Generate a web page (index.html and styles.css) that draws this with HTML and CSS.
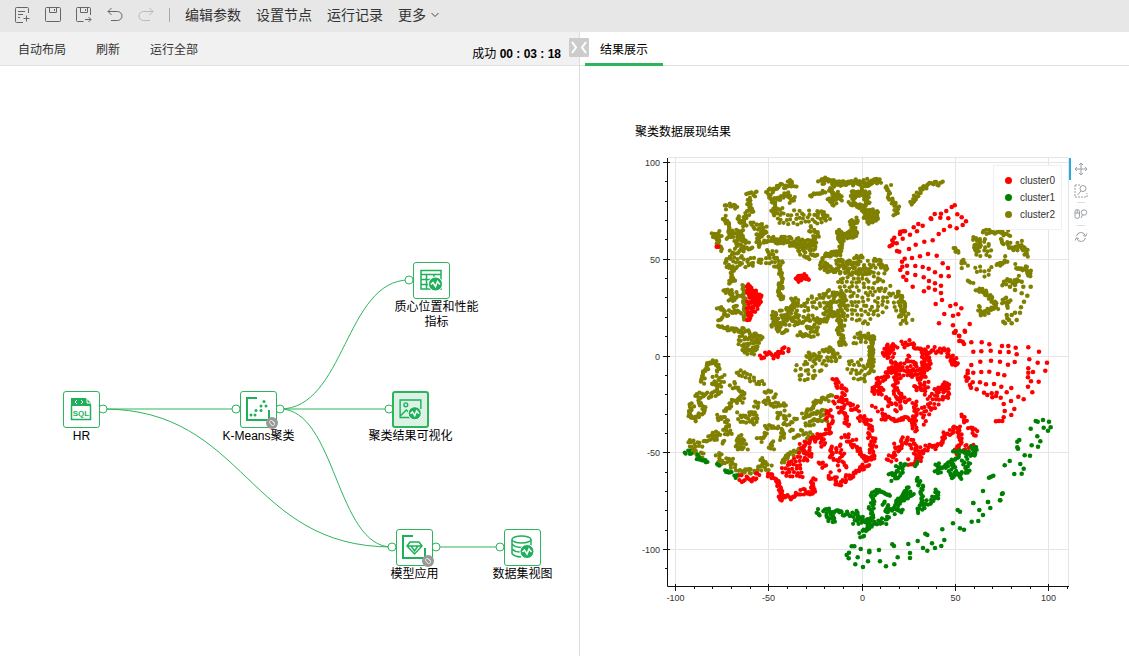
FILE: index.html
```html
<!DOCTYPE html>
<html lang="zh-CN">
<head>
    <meta charset="UTF-8">
    <meta name="viewport" content="width=device-width, initial-scale=1.0">
    <title>聚类结果可视化</title>
    <link rel="stylesheet" href="styles.css">
</head>
<body>
    <header class="menubar">
        <button class="icon-btn" type="button" aria-label="新建">
            <svg viewBox="0 0 16 18"><path d="M14.5 7V2.5a1 1 0 0 0-1-1H2.5a1 1 0 0 0-1 1v13a1 1 0 0 0 1 1H9M4 5.500h7M4 8.500h5M4 11.500h2M12.500 9.500v6M9.500 12.500h6"/></svg>
        </button>
        <button class="icon-btn" type="button" aria-label="保存">
            <svg viewBox="0 0 16 18"><path d="M1.500 1.500h13a1 1 0 0 1 1 1v12a1 1 0 0 1-1 1h-13a1 1 0 0 1-1-1v-12a1 1 0 0 1 1-1zM4.500 1.500v5h7v-5M9.500 3v2"/></svg>
        </button>
        <button class="icon-btn" type="button" aria-label="另存为">
            <svg viewBox="0 0 16 18"><path d="M14.500 9V2.500a1 1 0 0 0-1-1h-12a1 1 0 0 0-1 1v12a1 1 0 0 0 1 1h6M4.500 1.500v5h7v-5M9.500 3v2M9 13.500h6M12.500 11l2.500 2.500-2.500 2.500"/></svg>
        </button>
        <button class="icon-btn" type="button" aria-label="撤销">
            <svg viewBox="0 0 16 18"><path d="M4.500 2L1 5.500 4.500 9M1 5.500h9.500a4.500 4.500 0 0 1 0 9H4"/></svg>
        </button>
        <button class="icon-btn" type="button" aria-label="重做" disabled>
            <svg viewBox="0 0 16 18"><path d="M11.500 2L15 5.500 11.500 9M15 5.500H5.500a4.500 4.500 0 0 0 0 9H12"/></svg>
        </button>
        <span class="separator"></span>
        <button class="menu-btn" type="button">编辑参数</button>
        <button class="menu-btn" type="button">设置节点</button>
        <button class="menu-btn" type="button">运行记录</button>
        <button class="menu-btn" type="button">更多<svg class="caret" viewBox="0 0 8 6"><path d="M.5 1L4 4.500 7.500 1"/></svg></button>
    </header>

    <main class="workspace">
        <section class="flow">
            <div class="toolbar">
                <button class="tool-btn" type="button">自动布局</button>
                <button class="tool-btn" type="button">刷新</button>
                <button class="tool-btn" type="button">运行全部</button>
                <div class="status">成功 <b>00 : 03 : 18</b></div>
            </div>
            <button class="collapse" type="button" aria-label="收起">
                <svg viewBox="0 0 20 19"><path d="M3 4l4 5.500L3 15M17 4l-4 5.500 4 5.500"/></svg>
            </button>

            <div class="canvas">
                <svg class="wires">
                    <path d="M103 343H236"/>
                    <path d="M103 343C247 343 247 481 392 481"/>
                    <path d="M280 343C345 343 345 214 409 214"/>
                    <path d="M280 343H389"/>
                    <path d="M280 343C336 343 336 481 392 481"/>
                    <path d="M436 481H500"/>
                    <circle cx="103" cy="343" r="4"/>
                    <circle cx="236" cy="343" r="4"/>
                    <circle cx="280" cy="343" r="4"/>
                    <circle cx="409" cy="214" r="4"/>
                    <circle cx="389" cy="343" r="4"/>
                    <circle cx="392" cy="481" r="4"/>
                    <circle cx="436" cy="481" r="4"/>
                    <circle cx="500" cy="481" r="4"/>
                </svg>

                <div class="node node-hr">
                    <div class="node-box">
                        <svg viewBox="0 0 35 35">
                            <path class="fill" d="M7 6h15l5 5v3H7z"/>
                            <path class="line" d="M7.500 13v14.500h19V13"/>
                            <path class="cut" d="M13 8l-2 2 2 2M17 8l2 2-2 2M23 6v5h5"/>
                            <text class="sql" x="17" y="24">SQL</text>
                        </svg>
                    </div>
                    <div class="node-label">HR</div>
                </div>

                <div class="node node-kmeans">
                    <div class="node-box">
                        <svg viewBox="0 0 35 35">
                            <path class="thick" d="M16 6H6v22h22V18"/>
                            <g class="fill"><circle cx="10" cy="23" r="1.500"/><circle cx="14" cy="23" r="1.500"/><circle cx="15" cy="18.500" r="1.500"/><circle cx="20" cy="18.500" r="1.500"/><circle cx="20" cy="14" r="1.500"/><circle cx="25" cy="14" r="1.500"/><circle cx="23" cy="9.500" r="1.500"/></g>
                        </svg>
                        <svg class="badge" viewBox="0 0 12 12"><circle cx="6" cy="6" r="6"/><path d="M3 5l2-2 4 4-2 2zM4 6.500l2.500 2.500M6 3.500L9 6"/></svg>
                    </div>
                    <div class="node-label">K-Means聚类</div>
                </div>

                <div class="node node-metrics">
                    <div class="node-box">
                        <svg viewBox="0 0 35 35">
                            <path class="line" d="M7 7.500h20V26H7zM7 11.500h20M7 16.500h20M7 21.500h20M12.500 12v14M20 12v14"/>
                            <circle class="ring" cx="21.500" cy="21" r="7"/>
                            <path class="pulse" d="M17 21.500l2-2 2.500 4 2-5 2.500 3"/>
                        </svg>
                    </div>
                    <div class="node-label node-label-wrap">质心位置和性能指标</div>
                </div>

                <div class="node node-visual">
                    <div class="node-box active">
                        <svg viewBox="0 0 35 35">
                            <path class="line" d="M17 26H6.500V7.500h22V17M7 24l6-6 3 3"/>
                            <circle class="line" cx="12.500" cy="12.500" r="2"/>
                            <circle class="ring" cx="22" cy="21.500" r="7"/>
                            <path class="pulse" d="M17.500 22l2-2 2.500 4 2-5 2.500 3"/>
                        </svg>
                    </div>
                    <div class="node-label">聚类结果可视化</div>
                </div>

                <div class="node node-model">
                    <div class="node-box">
                        <svg viewBox="0 0 35 35">
                            <path class="thick" d="M16 6H6v22h22V18"/>
                            <path class="line" d="M13 12h9l3 4-7.500 8L10 16zM10 16h15M14 16l3.500 5 3.500-5"/>
                        </svg>
                        <svg class="badge" viewBox="0 0 12 12"><circle cx="6" cy="6" r="6"/><path d="M3 5l2-2 4 4-2 2zM4 6.500l2.500 2.500M6 3.500L9 6"/></svg>
                    </div>
                    <div class="node-label">模型应用</div>
                </div>

                <div class="node node-dataset">
                    <div class="node-box">
                        <svg viewBox="0 0 35 35">
                            <ellipse class="line" cx="16.500" cy="9.500" rx="9.500" ry="3.500"/>
                            <path class="line" d="M7 9.500v14q2 3 9 3.500M26 9.500v6M7 14q3 3.500 10 3.500M7 19q3 3 8 3"/>
                            <circle class="ring" cx="22" cy="21.500" r="7"/>
                            <path class="pulse" d="M17.500 22l2-2 2.500 4 2-5 2.500 3"/>
                        </svg>
                    </div>
                    <div class="node-label">数据集视图</div>
                </div>
            </div>
        </section>

        <section class="results">
            <nav class="tabs">
                <button class="tab" type="button">结果展示</button>
            </nav>
            <div class="report">
                <h1>聚类数据展现结果</h1>
                <div class="plot">
                    <svg class="chart" id="chart" viewBox="630 150 439 460"></svg>
                    <div class="plot-tools">
                        <button class="plot-btn selected" type="button" aria-label="平移">
                            <svg viewBox="0 0 14 14"><path d="M7 1v12M1 7h12M5 3l2-2 2 2M5 11l2 2 2-2M3 5L1 7l2 2M11 5l2 2-2 2"/></svg>
                        </button>
                        <button class="plot-btn" type="button" aria-label="框选缩放">
                            <svg viewBox="0 0 14 14"><path class="dash" d="M1 1v12h12V9M1 1h5"/><circle cx="9" cy="4.500" r="3"/><path d="M7 7l-3.500 4"/></svg>
                        </button>
                        <span class="plot-rule"></span>
                        <button class="plot-btn" type="button" aria-label="滚轮缩放">
                            <svg viewBox="0 0 14 14"><rect x="1" y="2.500" width="4.500" height="9" rx="2.200"/><path d="M1 6h4.500M3.200 3v3"/><circle cx="10" cy="5.500" r="2.700"/><path d="M8.500 8L7 11"/></svg>
                        </button>
                        <span class="plot-rule"></span>
                        <button class="plot-btn" type="button" aria-label="重置">
                            <svg viewBox="0 0 14 14"><path d="M2.500 6a4.600 4.600 0 0 1 8.800-.5M11.500 8a4.600 4.600 0 0 1-8.800.5M13 3.500l-1.500 3L9 5M1 10.500l1.500-3L5 9"/></svg>
                        </button>
                    </div>
                </div>
            </div>
        </section>
    </main>

    <script src="chart.js"></script>
</body>
</html>
```
FILE: styles.css
```css
* {
    box-sizing: border-box;
}

body {
    margin: 0;
    min-height: 100vh;
    display: flex;
    flex-direction: column;
    font-family: "Liberation Sans", "Noto Sans CJK SC", sans-serif;
    font-size: 12px;
    color: #000;
    background-color: #fff;
}

button {
    padding: 0;
    border: none;
    background: none;
    font-family: inherit;
    font-size: 12px;
    color: #333;
    cursor: pointer;
}

svg {
    display: block;
    fill: none;
}

/* Top menu */
.menubar {
    display: flex;
    align-items: center;
    gap: 15px;
    height: 32px;
    padding: 0 14px 2px;
    background-color: #e7e7e7;
}

.icon-btn svg {
    width: 16px;
    height: 18px;
    stroke: #666;
}

.icon-btn:disabled svg {
    stroke: #bbb;
}

.separator {
    width: 1px;
    height: 14px;
    background-color: #aaa;
}

.menu-btn {
    display: flex;
    align-items: center;
    gap: 5px;
    font-size: 14px;
    line-height: 20px;
}

.caret {
    width: 8px;
    height: 6px;
    stroke: #444;
}

/* Two panels */
.workspace {
    flex: 1;
    display: grid;
    grid-template-columns: 580fr 549fr;
}

.flow {
    position: relative;
    display: flex;
    flex-direction: column;
    border-right: 1px solid #ddd;
}

.toolbar {
    display: flex;
    align-items: center;
    gap: 30px;
    height: 34px;
    padding: 0 18px;
    background-color: #f1f1f1;
    border-bottom: 1px solid #e2e2e2;
}

.status {
    margin-left: auto;
    padding-top: 7px;
    white-space: pre;
}

.collapse {
    position: absolute;
    top: 6px;
    right: -10px;
    width: 20px;
    height: 19px;
    border-radius: 1px;
    background-color: #ccc;
}

.collapse svg {
    stroke: #fff;
    stroke-width: 2;
}

/* Workflow canvas */
.canvas {
    position: relative;
    flex: 1;
}

.wires {
    position: absolute;
    width: 100%;
    height: 100%;
    stroke: #2db55d;
}

.wires circle {
    fill: #fff;
}

.node {
    position: absolute;
    width: 97px;
}

.node-hr { left: 33px; top: 325px; }
.node-kmeans { left: 210px; top: 325px; }
.node-metrics { left: 383px; top: 196px; }
.node-visual { left: 362px; top: 325px; }
.node-model { left: 366px; top: 463px; }
.node-dataset { left: 474px; top: 463px; }

.node-box {
    position: relative;
    width: 37px;
    height: 37px;
    margin: 0 auto;
    border: 1px solid #2db55d;
    border-radius: 3px;
    background-color: #fff;
}

.node-box.active {
    border-width: 2px;
    background-color: #dcf2e5;
}

.node-box .fill {
    fill: #1eb15a;
}

.node-box .line {
    stroke: #1eb15a;
    stroke-width: 1.5;
}

.node-box .thick {
    stroke: #1eb15a;
    stroke-width: 2;
}

.node-box .cut {
    stroke: #fff;
}

.node-box .ring {
    fill: #1eb15a;
    stroke: #fff;
}

.node-box .pulse {
    stroke: #fff;
    stroke-width: 1.5;
}

.sql {
    fill: #1eb15a;
    font-size: 8px;
    font-weight: bold;
    text-anchor: middle;
}

.badge {
    position: absolute;
    right: -2px;
    bottom: -2px;
    width: 12px;
    height: 12px;
    fill: #999;
}

.badge path {
    fill: none;
    stroke: #ddd;
}

.node-label {
    margin-top: 1px;
    line-height: 15px;
    text-align: center;
}

.node-label-wrap {
    padding-left: 10px;
}

/* Results */
.tabs {
    height: 34px;
    padding-left: 5px;
    border-bottom: 1px solid #e2e2e2;
}

.tab {
    height: 34px;
    padding: 1px 15px 0;
    border-bottom: 3px solid #2db55d;
    color: #000;
}

.report {
    padding: 57px 20px 0 50px;
}

.report h1 {
    margin: 0 0 9px;
    padding-left: 5px;
    font-size: 12px;
    font-weight: normal;
    line-height: 18px;
}

.plot {
    display: flex;
}

.chart {
    width: 439px;
}

.grid {
    stroke: #e5e5e5;
}

.axis {
    stroke: #111;
}

.axis-label {
    font-size: 9px;
    fill: #333;
}

.legend-box {
    fill: #fff;
    fill-opacity: .95;
    stroke: #f0f0f0;
}

.legend-label {
    font-size: 10px;
    fill: #333;
}

.plot-tools {
    display: flex;
    flex-direction: column;
    align-items: center;
    padding-top: 8px;
}

.plot-btn {
    height: 22px;
    padding: 0 5px 0 3px;
    border-left: 2px solid transparent;
}

.plot-btn.selected {
    border-left-color: #26aae1;
}

.plot-btn svg {
    width: 14px;
    height: 14px;
    stroke: #999fa3;
}

.plot-btn .dash {
    stroke-dasharray: 2 1;
}

.plot-rule {
    width: 8px;
    height: 1px;
    background-color: #ddd;
}
```
FILE: chart.js
```javascript
const chart = document.getElementById('chart');
const colors = ['#ff0000', '#008000', '#808000'];

// Each tile: origin on the chart, points counted in thirds of a pixel.
// strands: "width x,y x,y ..."   areas: "spacing x,y x,y ..."   dots: single points
const tiles = [
    { color: 2, x: 630, y: 120, strands: [
        '8 570,190 585,175 605,180 615,192 640,190 655,183 690,195', '8 700,190 715,183', '8 720,192 750,180',
        '6 540,225 570,222 585,212', '9 600,205 615,225 635,232', '9 600,248 612,250 620,238',
        '7 665,232 690,215 690,200', '7 665,248 680,265', '9 710,215 705,245 720,240',
        '7 662,310 685,297', '5 665,320 678,323', '8 625,335 632,360', '5 632,360 632,390', '9 650,348 685,340',
        '9 408,212 430,210 445,198 465,195 485,185 495,203', '9 415,225 430,245 445,238 470,225', '9 480,215 490,245 480,240',
        '8 350,228 385,220', '8 355,235 365,270 345,290 330,305', '11 285,255 320,270', '9 283,290 295,310',
        '8 290,295 300,330 310,350 290,350', '7 325,290 345,320', '7 330,330 345,365',
        '8 435,250 430,275 460,272', '10 360,315 380,320 400,320 400,345 380,370', '16 315,360 350,380',
        '9 400,365 430,352 460,357 500,362 540,370 560,345 540,325', '10 480,375 550,385', '8 250,345 275,340', '4 262,350 265,370'
    ], areas: ['9 692,262 745,268 748,300 715,315', '13 430,270 580,272 600,300 555,322 500,318 435,315'] },
    { color: 2, x: 660, y: 230, strands: [
        '7 155,15 180,15', '4 170,20 175,45 188,65', '11 205,10 250,10', '12 235,20 240,50', '10 290,10 320,15', '10 285,30 300,50',
        '9 205,80 200,110 230,118', '10 210,65 280,50', '10 320,70 355,75', '9 340,30 385,40 410,45 440,55 465,50 465,15',
        '9 410,55 440,80 475,80', '10 480,90 500,115 525,130', '8 215,120 220,145 210,165', '7 495,75 540,70 545,60',
        '8 360,95 365,125 358,160 365,210', '12 350,180 375,205', '7 535,0 545,35', '9 560,15 595,10',
        '10 190,185 220,190 235,205', '9 175,230 200,250 245,245', '12 205,215 235,225', '4 250,165 255,270',
        '7 175,265 190,265', '7 175,285 215,300 250,300', '9 240,300 300,325', '8 250,365 290,365',
        '10 345,245 350,300 385,300', '9 335,285 340,290', '11 380,240 405,205 415,235', '10 370,270 420,265',
        '10 410,275 450,260 470,275 500,265 520,250 545,250', '11 415,310 440,320 465,310 475,285', '5 440,290 460,295',
        '12 500,230 520,220 540,185', '9 550,190 548,260', '10 495,355 525,365 535,395', '9 440,375 475,385', '8 635,320 635,430', '10 600,310 645,325',
        '9 540,265 545,345 560,345'
    ], areas: ['11 205,75 330,80 370,90 360,115 310,100 270,112 205,115', '10 225,320 280,310 310,320 295,360 250,370 235,345',
        '12 430,200 490,195 495,235 430,245', '14 435,375 460,370 500,350 520,355 535,390 500,405 480,430 460,465 430,462 400,430 400,410 435,390',
        '13 560,400 580,380 635,400 630,445 610,460 560,440', '11 335,250 400,220 420,250 400,295 340,295'] },
    { color: 2, x: 820, y: 170, strands: [
        '10 5,35 40,40 70,45 110,35 150,42 180,30', '10 45,60 40,95', '9 25,95 65,85', '10 95,70 150,75', '8 90,90 120,110 145,95',
        '7 90,160 115,150', '9 205,45 205,75 220,90', '10 215,105 230,105 225,140', '7 270,100 285,80 310,55 340,40 370,42',
        '13 0,125 25,155', '10 55,185 65,215', '9 70,200 110,185', '13 0,380 40,365 60,375', '10 10,430 60,430', '10 20,400 40,440',
        '8 15,255 60,245', '10 0,285 45,300', '8 165,265 200,300', '9 115,255 125,275', '7 155,520 150,590', '9 235,365 250,400 245,440',
        '10 490,190 510,180 540,185 575,190', '10 470,200 475,245', '10 545,205 580,240 600,220 620,235 615,260',
        '8 400,235 415,250', '10 530,285 560,265', '11 585,290 625,295', '7 625,300 630,320', '10 545,340 560,335 600,325',
        '7 450,330 455,345', '9 470,355 500,370 520,390', '10 470,415 490,435 525,415 530,395', '9 545,395 565,390 560,415'
    ], areas: ['9 120,110 175,120 175,150 145,165 125,135',
        '14 45,260 65,240 90,262 125,255 130,275 165,262 205,300 190,330 205,345 240,360 260,400 285,465 230,465 235,430 215,405 150,460 125,470 100,445 70,470 60,530 50,530 50,400 80,380 50,345',
        '13 85,490 165,495 165,520 100,525', '12 455,210 500,195 520,230 520,265 470,260', '15 415,260 450,260 450,300 420,300', '13 450,290 520,290 510,325 460,310',
        '10 45,265 90,265 160,300 140,320 60,310'],
    dots: '632,350 610,350 585,345 605,370 622,377 612,395 603,412 600,428 585,428 575,435 567,450 550,455 575,460 590,450 560,435 605,335 570,350 585,360 430,270 425,280 555,460 562,445' },
    { color: 2, x: 670, y: 340, strands: [
        '7 97,130 103,100 115,70 130,62 147,75 147,95', '11 125,120 165,115', '11 130,130 150,150 120,165 75,165',
        '10 65,190 60,225 75,242 100,215 95,190 80,185', '9 200,100 225,100', '10 185,130 215,155 215,180 185,190', '6 185,190 165,215',
        '12 285,165 320,160', '12 255,185 265,205', '10 280,190 330,195 350,205', '16 330,215 340,240 380,245', '9 140,230 175,240',
        '9 175,250 165,275 185,275', '9 400,225 440,190 490,170', '9 400,230 470,215', '10 410,260 440,235 475,235',
        '11 330,255 340,300', '13 360,280 430,285', '9 285,260 315,260', '11 265,300 290,280', '12 305,305 310,330', '9 155,305 165,300',
        '9 100,297 145,290 130,275', '9 65,330 100,350', '9 140,350 155,340', '10 145,365 190,365 185,385',
        '9 200,400 240,390 255,400', '11 265,390 285,360 300,390', '7 340,370 350,350 395,325'
    ], areas: ['10 225,95 285,125 285,145 220,115', '10 200,215 265,215 260,260 195,245', '9 55,300 95,305 100,320 50,325', '8 200,290 215,280 235,330 195,330'] },
    { color: 0, x: 660, y: 230, strands: ['7 407,140 430,138 448,148', '4 412,140 416,158', '9 262,165 275,185 300,205 300,220'],
        areas: ['8 256,165 275,170 305,195 308,220 280,255 265,278 256,240 262,200', '7 407,134 430,132 450,148 420,155'], dots: '170,50 175,50 262,270' },
    { color: 0, x: 670, y: 340, strands: ['11 205,415 235,420 270,408', '10 270,48 320,45 355,25', '9 295,400 310,410 325,430 330,475 365,470 400,455 430,455 430,415', '10 430,290 438,305'],
        areas: ['11 335,380 365,355 400,320 425,330 395,380 410,415 340,410'] },
    { color: 0, x: 800, y: 330, strands: [
        '7 100,145 115,165', '11 115,165 130,180 135,205', '11 100,210 130,210 165,235 180,235', '11 90,240 85,300 75,320', '10 120,230 135,270 140,290',
        '12 175,270 200,265 210,310 220,345', '10 220,345 215,385 185,420 150,440 115,460 85,430', '12 130,315 165,340 180,375 205,390',
        '15 115,345 120,380 130,420', '8 95,350 95,390', '9 60,310 70,350', '9 55,400 80,410', '9 45,320 50,330', '9 0,350 30,330', '10 20,355 30,390',
        '12 250,75 275,45 285,60 255,80', '11 275,85 300,110 260,130 240,150 225,190', '12 305,42 340,40 370,60 385,90 370,130 340,110 320,80',
        '11 380,60 435,60 470,105 465,85', '12 375,80 380,120', '9 265,200 270,230', '12 290,110 290,180 300,205 330,215', '10 295,200 295,245',
        '14 320,120 375,150 370,180', '12 345,165 380,185', '8 405,180 440,160 440,205', '10 345,215 345,260 340,305', '8 245,265 330,268',
        '13 260,385 290,380 290,350 320,325 335,345 355,370 365,385 320,395', '9 350,360 410,350 435,315 470,295',
        '8 480,260 500,275', '8 475,290 480,350 465,370', '9 510,290 530,315', '8 490,355 525,345'
    ], areas: ['11 215,175 245,150 260,200 225,200', '11 210,220 235,225 265,260 230,255', '11 360,240 385,200 435,155 442,185 435,210 405,240 380,270 370,290',
        '11 265,115 300,90 340,110 340,135 285,150'],
    dots: '465,8 478,18 495,5 480,32 492,42 514,37 545,37 568,43 606,48 625,48 647,53 685,52 717,65 520,65 544,64 572,62 600,66 626,66 650,73 688,88 713,98 741,98 514,105 541,95 573,92 600,95 644,96 624,104 503,122 520,128 544,126 568,125 594,132 613,136 685,115 685,128 699,126 736,122 497,140 500,152 518,157 540,157 510,165 513,173 530,178 558,163 582,162 604,170 634,174 620,187 552,188 562,195 575,190 588,198 602,203 577,202 590,188 684,142 693,154 716,155 684,170 697,187 655,200 671,208 633,213 611,222 643,237 614,243 634,255 611,262 607,273 597,273 588,274 503,130 505,145' },
    { color: 0, x: 820, y: 170, dots: '404,106 395,111 412,133 425,142 438,154 428,165 410,175 390,169 379,123 385,145 363,131 344,132 334,147 332,145 361,143 308,167 295,162 281,172 291,184 270,194 255,184 241,185 248,206 223,203 217,211 230,220 209,229 216,225 238,245 231,243 267,237 287,224 313,215 338,211 356,192 372,180 324,252 350,257 300,259 276,264 254,266 246,275 368,280 384,294 386,319 326,296 308,291 286,288 261,287 247,290 241,300 262,309 286,315 311,322 345,307 363,318 327,333 345,340 363,347 259,330 250,320 278,350 326,353 312,364 345,359 363,369 366,390 347,402 407,403 391,408 424,415 415,433 399,437 373,432 357,460 449,462 399,466 434,482 407,483 402,488 417,497 418,513 428,515 220,218 249,184 240,192' },
    { color: 1, x: 670, y: 340, strands: ['8 45,335 65,342', '7 80,350 112,368', '3 140,375 148,378', '6 165,393 185,397', '5 195,405 203,413'] },
    { color: 1, x: 800, y: 330, strands: [
        '7 460,370 490,365 525,375 528,355 510,352', '12 265,435 285,445 305,420 290,405', '6 310,405 320,402', '9 345,400 350,410',
        '11 410,400 410,425 440,400 460,400 470,378', '10 490,385 505,410 485,440 450,435 465,410'
    ], dots: '707,273 713,275 729,270 747,275 731,293 752,292 744,302 692,296 712,319 721,334 658,330 652,335 654,356 652,352 695,346 714,350 674,376 690,377 629,393 614,406 661,402 671,416 643,432 665,431 580,437 573,440 567,443 549,483 608,490 606,492 600,511 564,516 520,519' },
    { color: 1, x: 660, y: 440, strands: [
        '7 470,212 485,225', '9 495,225 515,245 522,230', '10 490,212 545,220 590,222 610,235', '11 580,245 635,250 660,250 690,235',
        '9 630,230 625,270 595,288', '9 635,205 635,175 645,150', '7 645,150 690,168', '8 635,205 635,240', '9 675,185 680,215 730,215',
        '10 710,175 740,180 735,155 750,145', '9 770,115 780,135 790,165', '9 705,205 750,150', '10 770,215 790,195 835,165 820,155', '8 785,170 795,200', '8 740,165 760,170'
    ], dots: '575,319 583,319 602,327 567,338 560,345 566,355 593,352 586,373 609,381 624,364 628,332 628,337 657,330 660,364 678,379 703,373 713,352 750,339 750,354 697,313 702,318 745,312 773,303 789,324 802,332 796,281 802,285 825,324 816,310 844,318 853,300 847,268 879,250 900,265 912,269 935,245 955,243 958,210 969,225 893,210 900,215 940,189 984,186 991,204 1021,181' }
];

function add(name, attrs, text) {
    const el = document.createElementNS('http://www.w3.org/2000/svg', name);
    for (const key in attrs) el.setAttribute(key, attrs[key]);
    if (text !== undefined) el.textContent = text;
    chart.appendChild(el);
}

let seed = 7;
function random() {
    seed = (seed * 16807) % 2147483647;
    return seed / 2147483647;
}

function parse(list) {
    return list.split(' ').map(p => p.split(',').map(Number));
}

function inside(x, y, poly) {
    let hit = false;
    for (let i = 0, j = poly.length - 1; i < poly.length; j = i++) {
        const [ax, ay] = poly[i];
        const [bx, by] = poly[j];
        if ((ay > y) !== (by > y) && x < (bx - ax) * (y - ay) / (by - ay) + ax) hit = !hit;
    }
    return hit;
}

function dot(tile, x, y, r) {
    add('circle', { cx: (tile.x + x / 3).toFixed(1), cy: (tile.y + y / 3).toFixed(1), r: r, fill: colors[tile.color] });
}

// Grid
for (let v = -100; v <= 100; v += 50) {
    const x = Math.round(861.7 + v * 1.866) + 0.5;
    const y = Math.round(355.5 - v * 1.934) + 0.5;
    add('path', { class: 'grid', d: `M${x} 158V586M668 ${y}H1068` });
}
add('path', { class: 'grid', d: 'M668 157.5H1068M1068.5 158V586' });

// Points
for (const tile of tiles) {
    for (const strand of tile.strands || []) {
        const cut = strand.indexOf(' ');
        const width = Number(strand.slice(0, cut));
        const pts = parse(strand.slice(cut + 1));
        for (let i = 1; i < pts.length; i++) {
            const [ax, ay] = pts[i - 1];
            const [bx, by] = pts[i];
            const len = Math.hypot(bx - ax, by - ay) || 1;
            for (let d = 0; d <= len; d += 4) {
                const off = (random() * 2 - 1) * width;
                dot(tile, ax + (bx - ax) * d / len - (by - ay) / len * off, ay + (by - ay) * d / len + (bx - ax) / len * off, 2.1);
            }
        }
    }
    for (const area of tile.areas || []) {
        const cut = area.indexOf(' ');
        const step = Number(area.slice(0, cut));
        const poly = parse(area.slice(cut + 1));
        const xs = poly.map(p => p[0]);
        const ys = poly.map(p => p[1]);
        for (let y = Math.min(...ys), row = 0; y <= Math.max(...ys); y += step, row++) {
            for (let x = Math.min(...xs) + (row % 2) * step / 3; x <= Math.max(...xs); x += step) {
                const px = x + (random() - 0.5) * step * 0.7;
                const py = y + (random() - 0.5) * step * 0.7;
                if (inside(px, py, poly)) dot(tile, px, py, 2.1);
            }
        }
    }
    if (tile.dots) parse(tile.dots).forEach(p => dot(tile, p[0], p[1], 2.3));
}

// Axes
add('path', { class: 'axis', d: 'M667.5 158V586.5H1069' });
for (let v = -110; v <= 110; v += 10) {
    const major = v % 50 === 0;
    const x = Math.round(861.7 + v * 1.866) + 0.5;
    const y = Math.round(355.5 - v * 1.934) + 0.5;
    if (v > -110) add('path', { class: 'axis', d: `M${x} ${major ? 584 : 586}V${major ? 591 : 589}` });
    if (v <= 100) add('path', { class: 'axis', d: `M${major ? 663 : 665} ${y}H${major ? 670 : 667}` });
    if (major) {
        add('text', { class: 'axis-label', x: x, y: 601, 'text-anchor': 'middle' }, v);
        add('text', { class: 'axis-label', x: 660, y: y + 3, 'text-anchor': 'end' }, v);
    }
}

// Legend
add('rect', { class: 'legend-box', x: 993.5, y: 165.5, width: 68, height: 64 });
colors.forEach((color, i) => {
    add('circle', { cx: 1008.5, cy: 180.5 + i * 17, r: 3.5, fill: color });
    add('text', { class: 'legend-label', x: 1020, y: 184 + i * 17 }, 'cluster' + i);
});
```
